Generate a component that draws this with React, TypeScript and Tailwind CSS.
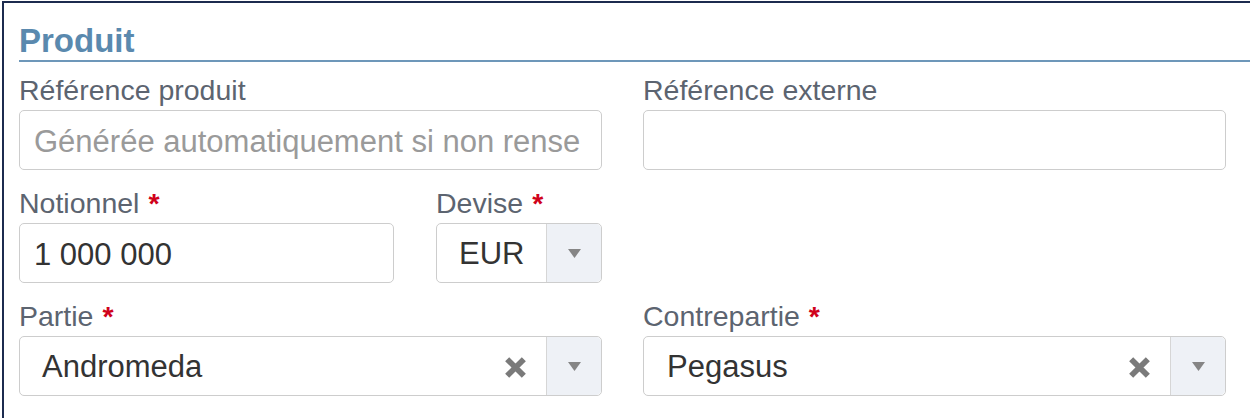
import React from 'react';

const Label: React.FC<{ text: string; required?: boolean }> = ({ text, required }) => (
    <div className="h-[39px] leading-[39px] text-[28.5px] text-[#5c6470] whitespace-nowrap">
        {text}
        {required && <span className="ml-[9px] font-bold text-[#d0021b]">*</span>}
    </div>
);

const TextInput: React.FC<{ value?: string; placeholder?: string }> = ({ value, placeholder }) => (
    <input
        readOnly
        value={value ?? ''}
        placeholder={placeholder}
        className="block w-full h-[60px] rounded-[5px] border border-[#cdcdcd] bg-white pl-[14px] pr-[20px] pt-[3px] text-[31px] text-[#333] placeholder:text-[#9a9a9a] outline-none font-['Liberation_Sans',Arial,sans-serif]"
    />
);

const Caret = () => (
    <div className="w-[55px] h-full shrink-0 border-l border-[#d6d6d6] bg-[#eef1f6] flex items-center justify-center rounded-r-[5px]">
        <svg width="13" height="9" viewBox="0 0 13 9">
            <path d="M0 0h13L6.5 9z" fill="#858585" />
        </svg>
    </div>
);

const Select: React.FC<{ value: string; clearable?: boolean; pad?: string }> = ({ value, clearable, pad = 'pl-[22px]' }) => (
    <div className="h-[60px] rounded-[5px] border border-[#cdcdcd] bg-white flex items-center">
        <div className={`flex-1 pt-[3px] text-[31px] text-[#333] whitespace-nowrap overflow-hidden ${pad}`}>{value}</div>
        {clearable && (
            <svg width="25" height="25" viewBox="0 0 24 24" className="mr-[18px] mt-[3px] shrink-0">
                <path d="M4 4L20 20M20 4L4 20" stroke="#7a7a7a" strokeWidth="5.5" />
            </svg>
        )}
        <Caret />
    </div>
);

export default function App() {
    return (
        <div className="w-[1250px] h-[418px] bg-white overflow-hidden font-['Liberation_Sans',Arial,sans-serif]">
            <div className="ml-[2px] mt-[1px] h-full border-l-2 border-t-2 border-[#1c2b4f] pl-[15px]">
                <div className="pt-[19px] leading-[38px] text-[33px] font-bold text-[#5a89ae] border-b-2 border-[#6d97b9]">
                    Produit
                </div>

                <div className="mt-[9px] pr-[24px] grid grid-cols-2 gap-x-[41px] gap-y-[14px]">
                    <div>
                        <Label text="Référence produit" />
                        <TextInput placeholder="Générée automatiquement si non renseignée" />
                    </div>
                    <div>
                        <Label text="Référence externe" />
                        <TextInput />
                    </div>

                    <div className="grid grid-cols-[1fr_166px] gap-x-[42px]">
                        <div>
                            <Label text="Notionnel" required />
                            <TextInput value="1 000 000" />
                        </div>
                        <div>
                            <Label text="Devise" required />
                            <Select value="EUR" pad="pl-[22px]" />
                        </div>
                    </div>
                    <div />

                    <div>
                        <Label text="Partie" required />
                        <Select value="Andromeda" clearable />
                    </div>
                    <div>
                        <Label text="Contrepartie" required />
                        <Select value="Pegasus" clearable pad="pl-[23px]" />
                    </div>
                </div>
            </div>
        </div>
    );
}
